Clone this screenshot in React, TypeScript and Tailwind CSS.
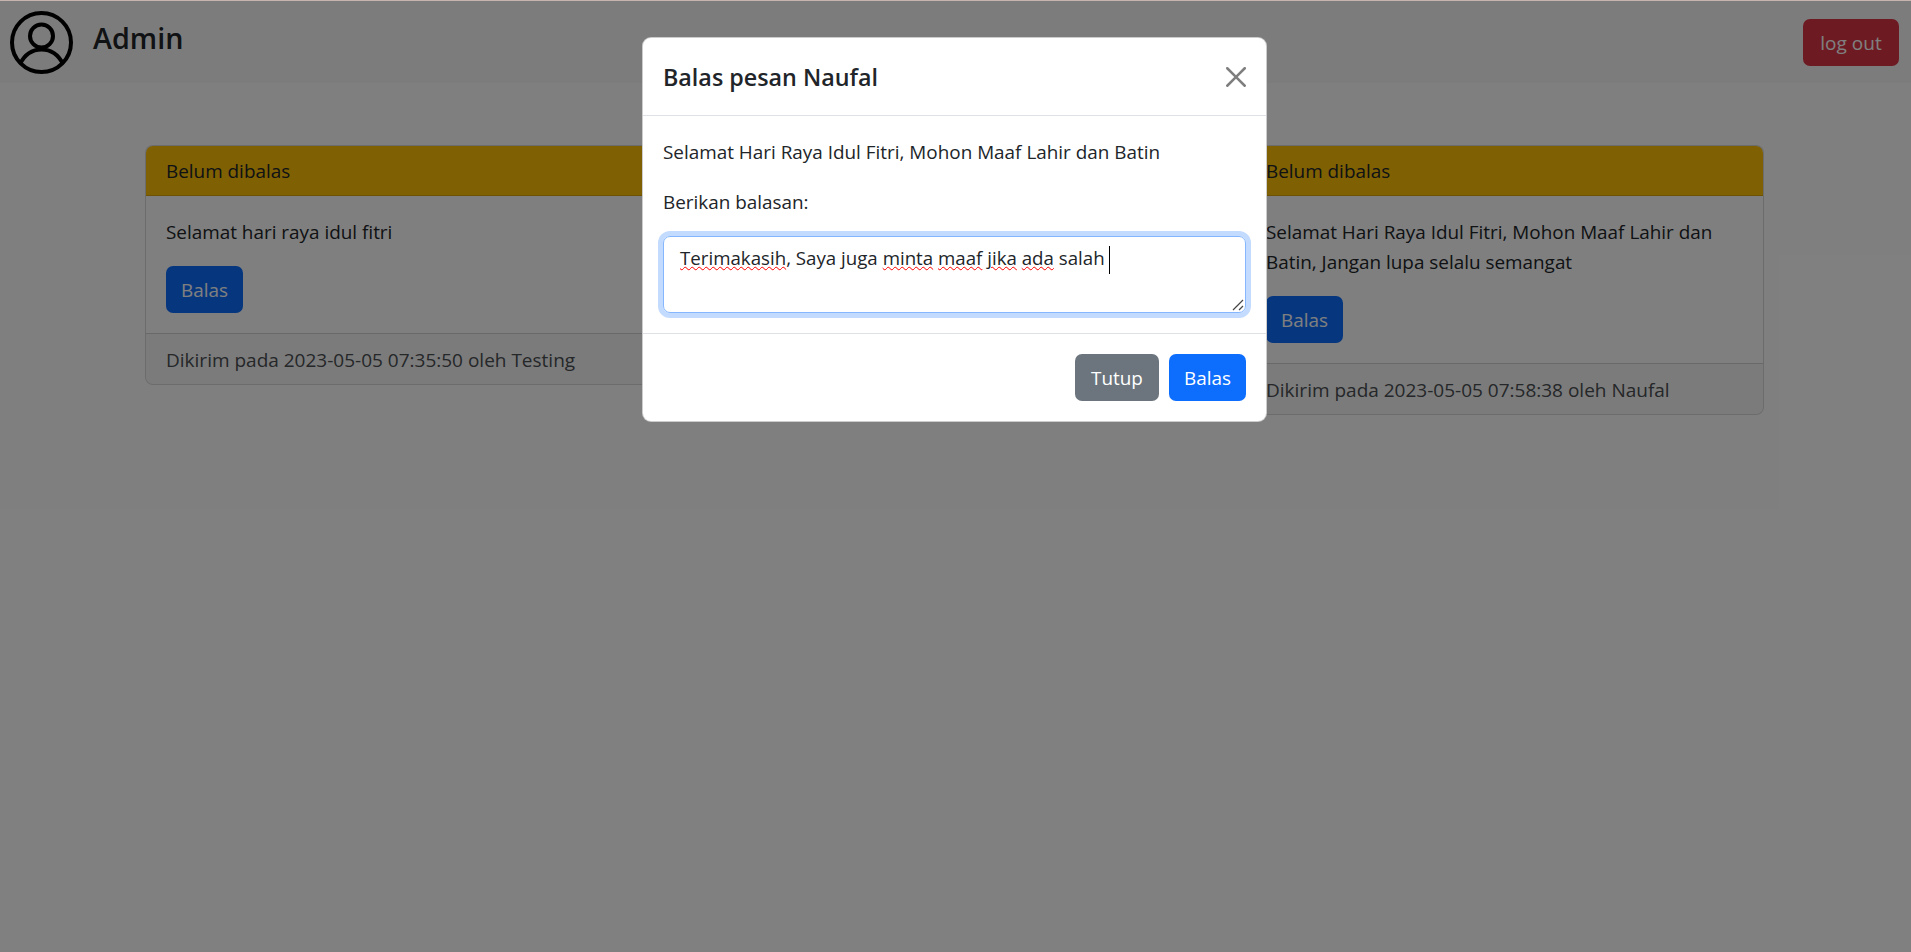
const Btn = ({ label, color, width }: { label: string; color: string; width: string }) => (
  <button className={`h-[47px] rounded-[7px] text-white ${color} ${width}`}>{label}</button>
)

function MessageCard({ text, sent }: { text: string; sent: string }) {
  return (
    <div className="overflow-hidden rounded-[8px] border border-black/15 bg-white">
      <div className="h-[50px] border-b border-black/15 bg-[#ffc107] px-5 py-[10px]">Belum dibalas</div>
      <div className="p-5">
        <p className="mb-[19px] pt-px">{text}</p>
        <Btn label="Balas" color="bg-[#0d6efd]" width="w-[77px]" />
      </div>
      <div className="border-t border-black/15 bg-black/[0.03] px-5 pt-[11px] pb-[9px] text-[19px] text-[#4a4e52]">{sent}</div>
    </div>
  )
}

const Typo = ({ children }: { children: string }) => (
  <span className="underline decoration-[#ff0000] decoration-wavy decoration-1 underline-offset-1">{children}</span>
)

export default function App() {
  return (
    <div className="relative min-h-[952px] w-full overflow-hidden bg-white font-['Open_Sans',sans-serif] text-[18.9px] leading-[30px] text-[#212529]">
      <nav className="flex h-[83px] items-start justify-between bg-[#f8f9fa] pr-3 pl-[10px] pt-[11px]">
        <div className="flex items-start gap-[19px]">
          <svg width="64" height="64" viewBox="0 0 64 64" fill="none" stroke="#000" strokeWidth="4">
            <circle cx="31.5" cy="31.5" r="29.5" />
            <circle cx="31.5" cy="25" r="11.5" />
            <path d="M10 53C15 43 23 38.5 31.5 38.5S48 43 53 53" />
          </svg>
          <span className="mt-[7px] text-[28.7px] leading-[40px] font-semibold">Admin</span>
        </div>
        <button className="mt-2 h-[47px] w-[96px] rounded-[7px] bg-[#dc3545] text-[19px] text-white">log out</button>
      </nav>

      <main className="mt-[62px] grid grid-cols-3 items-start gap-[31px] pr-[147px] pl-[145px]">
        <MessageCard text="Selamat hari raya idul fitri" sent="Dikirim pada 2023-05-05 07:35:50 oleh Testing" />
        <div />
        <MessageCard
          text="Selamat Hari Raya Idul Fitri, Mohon Maaf Lahir dan Batin, Jangan lupa selalu semangat"
          sent="Dikirim pada 2023-05-05 07:58:38 oleh Naufal"
        />
      </main>

      <div className="absolute inset-0 flex items-start justify-center bg-black/50 pt-[37px] pr-[2px]">
        <div className="w-[625px] rounded-[9px] border border-black/20 bg-white">
          <div className="flex h-[78px] items-center justify-between border-b border-[#dee2e6] px-5">
            <h5 className="text-[23.3px] font-semibold">Balas pesan Naufal</h5>
            <svg width="20" height="20" viewBox="0 0 16 16" fill="#000" className="opacity-50">
              <path d="M.293.293a1 1 0 0 1 1.414 0L8 6.586 14.293.293a1 1 0 1 1 1.414 1.414L9.414 8l6.293 6.293a1 1 0 0 1-1.414 1.414L8 9.414l-6.293 6.293a1 1 0 0 1-1.414-1.414L6.586 8 .293 1.707a1 1 0 0 1 0-1.414" />
            </svg>
          </div>
          <div className="px-5 pt-[21px] pb-5">
            <p className="mb-5">Selamat Hari Raya Idul Fitri, Mohon Maaf Lahir dan Batin</p>
            <p className="mb-[19px]">Berikan balasan:</p>
            <div className="relative h-[77px] rounded-[7px] border border-[#86b7fe] px-4 py-[6px] text-[18.7px] ring-[5px] ring-[#0d6efd]/25">
              <Typo>Terimakasih</Typo>, Saya juga <Typo>minta</Typo> <Typo>maaf</Typo> <Typo>jika</Typo> <Typo>ada</Typo> salah
              <span className="ml-[4px] inline-block h-[28px] w-px bg-black align-middle" />
              <svg width="12" height="12" viewBox="0 0 12 12" stroke="#444" strokeWidth="1.2" className="absolute right-px bottom-px">
                <path d="M1 11 11 1M7 11 11 7" />
              </svg>
            </div>
          </div>
          <div className="flex justify-end gap-[10px] border-t border-[#dee2e6] p-5">
            <Btn label="Tutup" color="bg-[#6c757d]" width="w-[84px]" />
            <Btn label="Balas" color="bg-[#0d6efd]" width="w-[77px]" />
          </div>
        </div>
      </div>
      <div className="absolute inset-x-0 top-0 h-px bg-[#c9b3ae]" />
    </div>
  )
}
